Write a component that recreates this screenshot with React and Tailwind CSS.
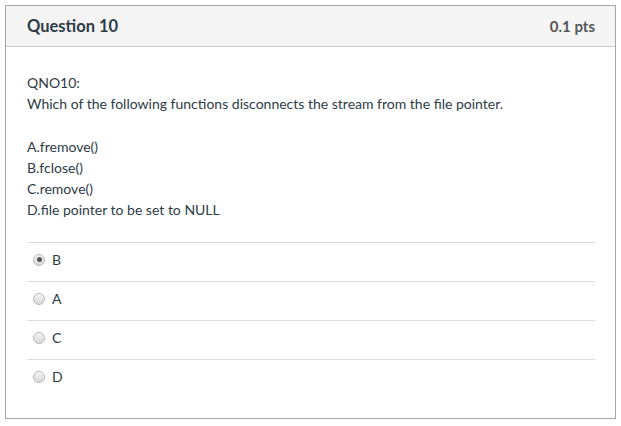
import React, { useState } from 'react';

const answers = ['B', 'A', 'C', 'D'];

const Radio = ({ checked }) => (
  <span className="flex h-[12px] w-[12px] items-center justify-center rounded-full border border-[#b8b8b8] bg-gradient-to-b from-[#f4f4f4] to-[#d8d8d8]">
    {checked && <span className="h-[5px] w-[5px] rounded-full bg-[#555]" />}
  </span>
);

const App = () => {
  const [selected, setSelected] = useState('B');

  return (
    <div className="min-h-[426px] bg-white p-[5px] font-['Lato','Liberation_Sans',sans-serif] text-[#2d3b45]">
      <div className="h-[414px] w-[611px] border border-[#a5a5a5]">
        <div className="flex h-[41px] items-center justify-between border-b border-[#c7cdd1] bg-[#f5f5f5] pl-[21px] pr-[20px]">
          <h2 className="text-[16.5px] font-bold text-[#2d3b45]">Question 10</h2>
          <span className="text-[15px] font-bold text-[#555]">0.1 pts</span>
        </div>
        <div className="pl-[21px] pr-[20px] pt-[25px] text-[14px] leading-[21px]">
          <p>QNO10:</p>
          <p>Which of the following functions disconnects the stream from the file pointer.</p>
          <p className="h-[22px]"></p>
          <p>A.fremove()</p>
          <p>B.fclose()</p>
          <p>C.remove()</p>
          <p>D.file pointer to be set to NULL</p>
          <div className="mt-[22px]">
            {answers.map((a) => (
              <label
                key={a}
                onClick={() => setSelected(a)}
                className="flex h-[39px] cursor-pointer items-start gap-[7px] border-t border-[#dcdcdc] pl-[6px] pt-[6px] text-[14px] leading-[21px]"
              >
                <span className="flex h-[21px] items-center">
                  <Radio checked={selected === a} />
                </span>
                <span>{a}</span>
              </label>
            ))}
          </div>
        </div>
      </div>
    </div>
  );
};

export default App;
